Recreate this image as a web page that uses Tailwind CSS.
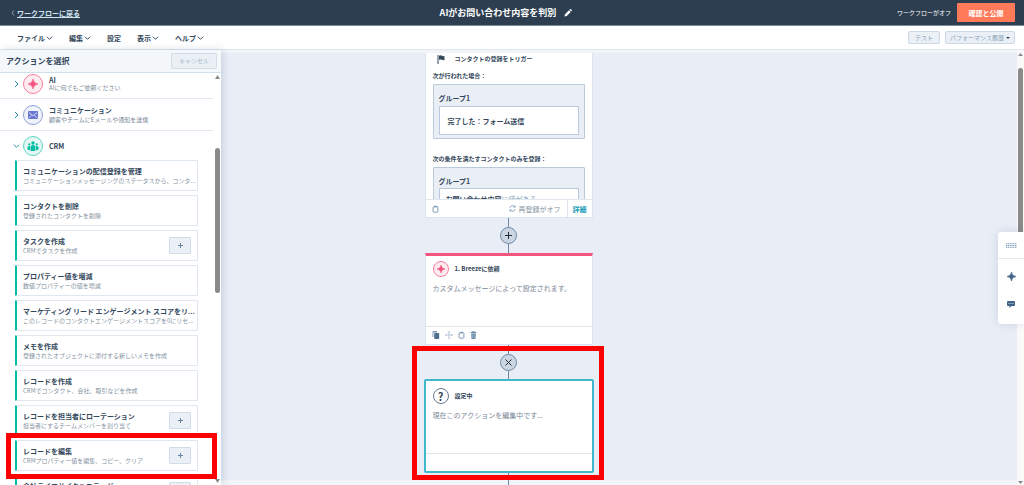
<!DOCTYPE html>
<html lang="ja">
<head>
<meta charset="utf-8">
<meta name="viewport" content="width=device-width, initial-scale=1">
<title>AIがお問い合わせ内容を判別</title>
<script src="https://cdn.jsdelivr.net/npm/@tailwindcss/browser@4"></script>
</head>
<body class="relative flex h-screen flex-col overflow-hidden bg-white font-['Noto_Sans_CJK_JP','Noto_Sans',sans-serif] text-[7px] leading-[10px] text-[#33475b]">
<svg class="hidden">
  <symbol id="down" viewBox="0 0 8 6"><path d="M1 1.5 4 4.5 7 1.5" fill="none" stroke="currentColor" stroke-width="1.1"/></symbol>
  <symbol id="spark" viewBox="0 0 12 12"><path d="M6 0Q6.6 5.4 12 6Q6.6 6.6 6 12Q5.4 6.6 0 6Q5.4 5.4 6 0Z" fill="currentColor" stroke="currentColor" stroke-width=".8"/></symbol>
  <symbol id="clip" viewBox="0 0 8 10"><rect x="1" y="2" width="6" height="7" rx="1" fill="none" stroke="currentColor" stroke-width="1.2"/><path d="M2.3 1h3.4v2H2.3z" fill="currentColor"/></symbol>
</svg>

<header class="grid h-[26px] shrink-0 grid-cols-3 items-center border-b border-[#7d8a99] bg-[#2d3e50] text-white">
  <a href="#" class="flex items-center gap-[2px] pl-[11px] font-bold"><svg class="h-[6px] w-[4px]" viewBox="0 0 4 6"><path d="M3 .5 1 3 3 5.5" fill="none" stroke="#9fb0c2" stroke-width=".8"/></svg><span class="text-[#cfe3ee] underline">ワークフローに戻る</span></a>
  <h1 class="flex items-center justify-center gap-2 pr-[12px] text-[9px] font-bold whitespace-nowrap">AIがお問い合わせ内容を判別
    <button aria-label="名前を編集"><svg class="h-[8px] w-[8px]" viewBox="0 0 8 8" fill="#fff"><path d="M.4 7.6 1 5.2 4.9 1.3 6.7 3.1 2.8 7zM5.4.8 6 .3q.5-.4 1 0l.7.7q.4.5 0 1l-.5.6z"/></svg></button></h1>
  <div class="flex items-center justify-end gap-[6px] pr-[9px] text-[6px]"><span>ワークフローがオフ</span><button class="h-[19px] w-[58px] rounded-[1px] bg-[#ff7a59] text-[7px] font-bold">確認と公開</button></div>
</header>

<nav class="flex h-[24px] shrink-0 items-center border-b border-[#dfe6ee] pr-[9px] pl-[17px] font-bold">
  <div class="flex flex-1 items-center gap-[16px]">
    <button class="flex items-center gap-[1px]">ファイル<svg class="h-[6px] w-[7px]"><use href="#down"/></svg></button>
    <button class="flex items-center gap-[1px]">編集<svg class="h-[6px] w-[7px]"><use href="#down"/></svg></button>
    <button>設定</button>
    <button class="flex items-center gap-[1px]">表示<svg class="h-[6px] w-[7px]"><use href="#down"/></svg></button>
    <button class="flex items-center gap-[1px]">ヘルプ<svg class="h-[6px] w-[7px]"><use href="#down"/></svg></button>
  </div>
  <div class="flex gap-[5px] text-[6px] font-normal text-[#8ba3bb]">
    <button class="h-[13px] w-[32px] rounded-[2px] border border-[#cbd9e6] bg-[#eaf0f6]">テスト</button>
    <button class="flex h-[13px] w-[70px] items-center justify-center gap-[2px] rounded-[2px] border border-[#cbd9e6] bg-[#eaf0f6] whitespace-nowrap">パフォーマンス履歴<svg class="h-[2px] w-[4px]" viewBox="0 0 4 2"><path d="M0 0h4L2 2z" fill="#33475b"/></svg></button>
  </div>
</nav>

<main class="grid min-h-0 flex-1 grid-cols-1 grid-rows-1">
  <!-- workflow canvas -->
  <section class="col-start-1 row-start-1 flex min-h-0">
    <div class="flex flex-1 flex-col items-center overflow-hidden border-t-[3px] border-[#f1f5f9] bg-[linear-gradient(to_top,#f1f5f9_5px,#e9eef6_5px)]">
      <article class="flex h-[165px] w-[168px] shrink-0 flex-col border border-t-0 border-[#dbe4ee] bg-white">
        <div class="min-h-0 flex-1 overflow-hidden px-[7px] text-[6px] font-bold">
          <h2 class="flex h-[12px] items-center gap-[10px] pl-[4px]"><svg class="h-[9px] w-[8px]" viewBox="0 0 8 9" fill="#33475b"><path d="M.5 0h1v9h-1zM2 .7q1.500-.7 3 0t2.500.3v4q-1.500.4-2.500-.2T2 4.700z"/></svg>コンタクトの登録をトリガー</h2>
          <p class="mt-[6px]">次が行われた場合：</p>
          <div class="mt-[3px] h-[55px] rounded-[1px] border border-[#b8cadb] bg-[#eaeff6] px-[5px] pt-[8px] text-[7px]">グループ1
            <div class="mt-[3px] flex h-[29px] items-center border border-[#b8cadb] bg-white px-[8px]">完了した：フォーム送信</div>
          </div>
          <p class="mt-[15px]">次の条件を満たすコンタクトのみを登録：</p>
          <div class="mt-[3px] h-[55px] rounded-[1px] border border-[#b8cadb] bg-[#eaeff6] px-[5px] pt-[8px] text-[7px]">グループ1
            <div class="mt-[2px] h-[29px] border border-[#b8cadb] bg-white px-[6px] pt-[5px]">お問い合わせ内容<span class="font-normal text-[#7c98b6]">に値がある</span></div>
          </div>
        </div>
        <footer class="flex h-[18px] shrink-0 items-center border-t border-[#dfe6ee] bg-white text-[#8795a4]">
          <button aria-label="コピー" class="ml-[6px] text-[#7c98b6]"><svg class="h-[8px] w-[7px]"><use href="#clip"/></svg></button>
          <svg class="mr-[3px] ml-auto h-[7px] w-[7px]" viewBox="0 0 8 8" fill="none" stroke="#7c98b6" stroke-width=".9"><path d="M1 3.500A3.200 3.200 0 0 1 6.800 2.200M7 .5v2H5M7 4.500A3.200 3.200 0 0 1 1.200 5.800M1 7.500v-2h2"/></svg>
          <span>再登録がオフ</span>
          <a href="#" class="ml-[6px] flex h-full items-center border-l border-[#dfe6ee] px-[5px] font-bold text-[#1a9db5]">詳細</a>
        </footer>
      </article>
      <div class="h-[9px] w-px shrink-0 bg-[#6f88a3]"></div>
      <button aria-label="アクションを追加" class="flex h-[17px] w-[17px] shrink-0 items-center justify-center rounded-full border border-[#6f88a3] bg-[#cbd6e2]"><svg class="h-[7px] w-[7px]" viewBox="0 0 7 7"><path d="M3.500 0v7M0 3.500h7" stroke="#1f2d3b"/></svg></button>
      <div class="h-[9px] w-px shrink-0 bg-[#6f88a3]"></div>
      <article class="flex h-[92px] w-[168px] shrink-0 flex-col border border-t-[3px] border-[#dbe4ee] border-t-[#f2547d] bg-white">
        <div class="flex-1 px-[7px] pt-[5px]">
          <h2 class="flex items-center gap-[6px] text-[6px] font-bold"><span class="flex h-[16px] w-[16px] items-center justify-center rounded-full border border-[#f77c9b] bg-[#fdedf1] text-[#f2547d]"><svg class="h-[8px] w-[8px]"><use href="#spark"/></svg></span>1. Breezeに依頼</h2>
          <p class="mt-[6px] whitespace-nowrap text-[#7b8998]">カスタムメッセージによって設定されます。</p>
        </div>
        <footer class="flex h-[18px] items-center gap-[5px] border-t border-[#dfe6ee] pb-[2px] pl-[6px] text-[#7c98b6]">
          <button aria-label="複製"><svg class="h-[8px] w-[8px]" viewBox="0 0 8 8"><path d="M1 0h4v1.400H1.400V6H.500V1z" fill="#7c98b6"/><rect x="2.200" y="2" width="5" height="6" rx=".8" fill="#516f90"/></svg></button>
          <button aria-label="移動"><svg class="h-[8px] w-[8px]" viewBox="0 0 8 8" fill="none" stroke="#a9bdd1" stroke-width=".8"><path d="M4 .5v7M.5 4h7M3 1.500l1-1 1 1M3 6.500l1 1 1-1M1.500 3l-1 1 1 1M6.500 3l1 1-1 1"/></svg></button>
          <button aria-label="貼り付け"><svg class="h-[8px] w-[7px]"><use href="#clip"/></svg></button>
          <button aria-label="削除"><svg class="h-[8px] w-[7px]" viewBox="0 0 7 8" fill="#6685a5"><path d="M.7 1h1.600V.2h2.400V1h1.600v1H.7zM1.200 2.500h4.600L5.500 8h-4z"/><path d="M2.700 3.300v4M4.300 3.300v4" stroke="#c9d6e3" stroke-width=".5"/></svg></button>
        </footer>
      </article>
      <div class="h-[9px] w-px shrink-0 bg-[#6f88a3]"></div>
      <button aria-label="閉じる" class="flex h-[17px] w-[17px] shrink-0 items-center justify-center rounded-full border border-[#6f88a3] bg-[#cbd6e2]"><svg class="h-[7px] w-[7px]" viewBox="0 0 7 7"><path d="M.5.5l6 6M6.500.5l-6 6" stroke="#1f2d3b"/></svg></button>
      <div class="h-[8px] w-px shrink-0 bg-[#6f88a3]"></div>
      <article class="flex h-[94px] w-[170px] shrink-0 flex-col rounded-[2px] border-2 border-[#3fb8cb] bg-white">
        <div class="flex-1 px-[7px] pt-[7px]">
          <h2 class="flex items-center gap-[6px] text-[6px] font-bold"><span class="flex h-[16px] w-[16px] items-center justify-center rounded-full border border-[#65788b] text-[11px]">?</span>設定中</h2>
          <p class="mt-[6px] text-[#7b8998]">現在このアクションを編集中です...</p>
        </div>
        <footer class="h-[18px] border-t border-[#dfe6ee]"></footer>
      </article>
      <div class="h-[12px] w-px shrink-0 bg-[#6f88a3]"></div>
    </div>
    <div class="flex w-[7px] flex-col items-center bg-[#fafafa] pt-[3px] pb-[1px]">
      <svg class="h-[3px] w-[5px]" viewBox="0 0 5 3"><path d="M0 3h5L2.500 0z" fill="#8a8a8a"/></svg>
      <div class="mt-[12px] h-[168px] w-[5px] rounded-full bg-[#8a8a8a]"></div>
      <svg class="mt-auto h-[3px] w-[5px]" viewBox="0 0 5 3"><path d="M0 0h5L2.500 3z" fill="#8a8a8a"/></svg>
    </div>
  </section>

  <!-- action picker -->
  <aside class="col-start-1 row-start-1 flex min-h-0 w-[221px] flex-col bg-white shadow-[2px_0_8px_rgba(60,90,130,0.2)]">
    <div class="flex h-[23px] shrink-0 items-center justify-between border-b border-[#d3dfe9] bg-[#f5f8fa] pr-[4px] pl-[6px]">
      <h2 class="text-[8px] font-bold">アクションを選択</h2>
      <button class="h-[16px] w-[46px] rounded-[1px] border border-[#d3dee9] bg-[#eaf0f6] text-[6px] text-[#a9bac9]">キャンセル</button>
    </div>
    <div class="flex min-h-0 flex-1">
      <div class="min-w-0 flex-1 overflow-hidden">
        <button class="flex h-[26px] w-full items-center border-b border-[#dfe8f1] pb-[3px] pl-[14px] text-left">
          <svg class="mr-[4px] h-[8px] w-[5px]" viewBox="0 0 5 8"><path d="M1 1l3 3-3 3" fill="none" stroke="#1a8ea5"/></svg>
          <span class="mr-[6px] flex h-[20px] w-[20px] items-center justify-center rounded-full border border-[#f77c9b] bg-[#fdedf1] text-[#f2547d]"><svg class="h-[10px] w-[10px]"><use href="#spark"/></svg></span>
          <span class="leading-[8px]"><b class="block">AI</b><span class="block text-[6px] text-[#7b8998]">AIに何でもご依頼ください</span></span>
        </button>
        <button class="flex h-[32px] w-full items-center border-b border-[#dfe8f1] pl-[14px] text-left">
          <svg class="mr-[4px] h-[8px] w-[5px]" viewBox="0 0 5 8"><path d="M1 1l3 3-3 3" fill="none" stroke="#1a8ea5"/></svg>
          <span class="mr-[6px] flex h-[20px] w-[20px] items-center justify-center rounded-full border border-[#8c9fd8] bg-[#f1f3fb]"><svg class="h-[8px] w-[10px]" viewBox="0 0 10 8"><rect width="10" height="8" rx=".8" fill="#6a78d1"/><path d="M1 1.500 5 4.700 9 1.500M1 6.800 3.500 4.300M9 6.800 6.500 4.300" fill="none" stroke="#fff" stroke-width=".7"/></svg></span>
          <span class="leading-[9px]"><b class="block">コミュニケーション</b><span class="block text-[6px] text-[#7b8998]">顧客やチームにEメールや通知を送信</span></span>
        </button>
        <button class="flex h-[29px] w-full items-center pl-[13px] text-left">
          <svg class="mr-[3px] h-[6px] w-[7px] text-[#1a8ea5]"><use href="#down"/></svg>
          <span class="mr-[6px] flex h-[20px] w-[20px] items-center justify-center rounded-full border border-[#5fd3c5] bg-[#e5f7f4]"><svg class="h-[10px] w-[12px]" viewBox="0 0 12 10" fill="#00bda5"><circle cx="6" cy="2" r="1.700"/><path d="M3.800 10V5.500Q3.800 4 6 4t2.200 1.500V10z"/><circle cx="2.300" cy="3.400" r="1.100"/><circle cx="9.700" cy="3.400" r="1.100"/><path d="M.5 8.500V6Q.6 4.900 3.300 4.900V9.500zM11.500 8.500V6Q11.400 4.900 8.700 4.900V9.500z"/></svg></span>
          <b>CRM</b>
        </button>
        <ul class="flex flex-col gap-[4px] px-[15px] whitespace-nowrap">
          <li class="flex h-[31px] shrink-0 items-center rounded-[1px] border border-l-2 border-[#dfe8f1] border-l-[#00bda5] px-[6px]"><div class="min-w-0 flex-1"><h3 class="font-bold">コミュニケーションの配信登録を管理</h3><p class="text-[6px] text-[#8593a1]">コミュニケーションメッセージングのステータスから、コンタ...</p></div></li>
          <li class="flex h-[31px] shrink-0 items-center rounded-[1px] border border-l-2 border-[#dfe8f1] border-l-[#00bda5] px-[6px]"><div class="min-w-0 flex-1"><h3 class="font-bold">コンタクトを削除</h3><p class="text-[6px] text-[#8593a1]">登録されたコンタクトを削除</p></div></li>
          <li class="flex h-[31px] shrink-0 items-center rounded-[1px] border border-l-2 border-[#dfe8f1] border-l-[#00bda5] px-[6px]"><div class="min-w-0 flex-1"><h3 class="font-bold">タスクを作成</h3><p class="text-[6px] text-[#8593a1]">CRMでタスクを作成</p></div><button aria-label="追加" class="flex h-[17px] w-[22px] items-center justify-center rounded-[1px] border border-[#d0dce8] bg-[#eaf0f6]"><svg class="h-[5px] w-[5px]" viewBox="0 0 5 5"><path d="M2.500 0v5M0 2.500h5" stroke="#6685a5"/></svg></button></li>
          <li class="flex h-[31px] shrink-0 items-center rounded-[1px] border border-l-2 border-[#dfe8f1] border-l-[#00bda5] px-[6px]"><div class="min-w-0 flex-1"><h3 class="font-bold">プロパティー値を増減</h3><p class="text-[6px] text-[#8593a1]">数値プロパティーの値を増減</p></div></li>
          <li class="flex h-[31px] shrink-0 items-center rounded-[1px] border border-l-2 border-[#dfe8f1] border-l-[#00bda5] px-[6px]"><div class="min-w-0 flex-1"><h3 class="font-bold">マーケティング リード エンゲージメント スコアをリ...</h3><p class="text-[6px] text-[#8593a1]">このレコードのコンタクトエンゲージメントスコアを0にリセ...</p></div></li>
          <li class="flex h-[31px] shrink-0 items-center rounded-[1px] border border-l-2 border-[#dfe8f1] border-l-[#00bda5] px-[6px]"><div class="min-w-0 flex-1"><h3 class="font-bold">メモを作成</h3><p class="text-[6px] text-[#8593a1]">登録されたオブジェクトに添付する新しいメモを作成</p></div></li>
          <li class="flex h-[31px] shrink-0 items-center rounded-[1px] border border-l-2 border-[#dfe8f1] border-l-[#00bda5] px-[6px]"><div class="min-w-0 flex-1"><h3 class="font-bold">レコードを作成</h3><p class="text-[6px] text-[#8593a1]">CRMでコンタクト、会社、取引などを作成</p></div></li>
          <li class="flex h-[31px] shrink-0 items-center rounded-[1px] border border-l-2 border-[#dfe8f1] border-l-[#00bda5] px-[6px]"><div class="min-w-0 flex-1"><h3 class="font-bold">レコードを担当者にローテーション</h3><p class="text-[6px] text-[#8593a1]">担当者にするチームメンバーを割り当て</p></div><button aria-label="追加" class="flex h-[17px] w-[22px] items-center justify-center rounded-[1px] border border-[#d0dce8] bg-[#eaf0f6]"><svg class="h-[5px] w-[5px]" viewBox="0 0 5 5"><path d="M2.500 0v5M0 2.500h5" stroke="#6685a5"/></svg></button></li>
          <li class="flex h-[31px] shrink-0 items-center rounded-[1px] border border-l-2 border-[#dfe8f1] border-l-[#00bda5] px-[6px]"><div class="min-w-0 flex-1"><h3 class="font-bold">レコードを編集</h3><p class="text-[6px] text-[#8593a1]">CRMプロパティー値を編集、コピー、クリア</p></div><button aria-label="追加" class="flex h-[17px] w-[22px] items-center justify-center rounded-[1px] border border-[#d0dce8] bg-[#eaf0f6]"><svg class="h-[5px] w-[5px]" viewBox="0 0 5 5"><path d="M2.500 0v5M0 2.500h5" stroke="#6685a5"/></svg></button></li>
          <li class="flex h-[31px] shrink-0 items-center rounded-[1px] border border-l-2 border-[#dfe8f1] border-l-[#00bda5] px-[6px]"><div class="min-w-0 flex-1"><h3 class="font-bold">会社ライフサイクルステージ</h3><p class="text-[6px] text-[#8593a1]">会社のステージを編集</p></div><button aria-label="追加" class="flex h-[17px] w-[22px] items-center justify-center rounded-[1px] border border-[#d0dce8] bg-[#eaf0f6]"></button></li>
        </ul>
      </div>
      <div class="flex w-[8px] flex-col items-center pt-[2px] pb-[2px]">
        <svg class="h-[4px] w-[5px]" viewBox="0 0 5 4"><path d="M0 4h5L2.500 0z" fill="#8a8a8a"/></svg>
        <div class="mt-[69px] h-[145px] w-[5px] rounded-full bg-[#8a8a8a]"></div>
        <svg class="mt-auto h-[4px] w-[5px]" viewBox="0 0 5 4"><path d="M0 0h5L2.500 4z" fill="#8a8a8a"/></svg>
      </div>
    </div>
  </aside>
</main>

<!-- floating tools -->
<div class="absolute top-[232px] right-0 flex h-[92px] w-[26px] flex-col items-center rounded-l-[3px] bg-white text-[#42648a] shadow-[0_0_10px_rgba(60,90,130,0.18)]">
  <button aria-label="キーパッド" class="flex h-[27px] w-full items-center justify-center border-b border-[#e6ebf1]"><svg class="h-[5px] w-[11px]" viewBox="0 0 11 5"><path d="M0 .7h11M0 2.500h11M0 4.300h11" stroke="#7f9cba" stroke-width="1" stroke-dasharray="1.300 .5"/></svg></button>
  <button aria-label="アシスタント" class="mt-[13px]"><svg class="h-[9px] w-[9px]"><use href="#spark"/></svg></button>
  <button aria-label="コメント" class="mt-[20px]"><svg class="h-[7px] w-[8px]" viewBox="0 0 8 7"><path d="M1 0h6q1 0 1 1v3q0 1-1 1H4.500L2.500 7V5H1Q0 5 0 4V1Q0 0 1 0z" fill="#42648a"/><path d="M1.500 2.500h5" stroke="#fff" stroke-width=".7" stroke-dasharray="1 1"/></svg></button>
</div>

<!-- highlight frames -->
<div class="pointer-events-none absolute top-[433px] left-[6px] h-[46px] w-[211px] border-[5px] border-[#fe0000]"></div>
<div class="pointer-events-none absolute top-[346px] left-1/2 -ml-[100px] h-[134px] w-[192px] border-[5px] border-[#fe0000]"></div>
</body>
</html>
